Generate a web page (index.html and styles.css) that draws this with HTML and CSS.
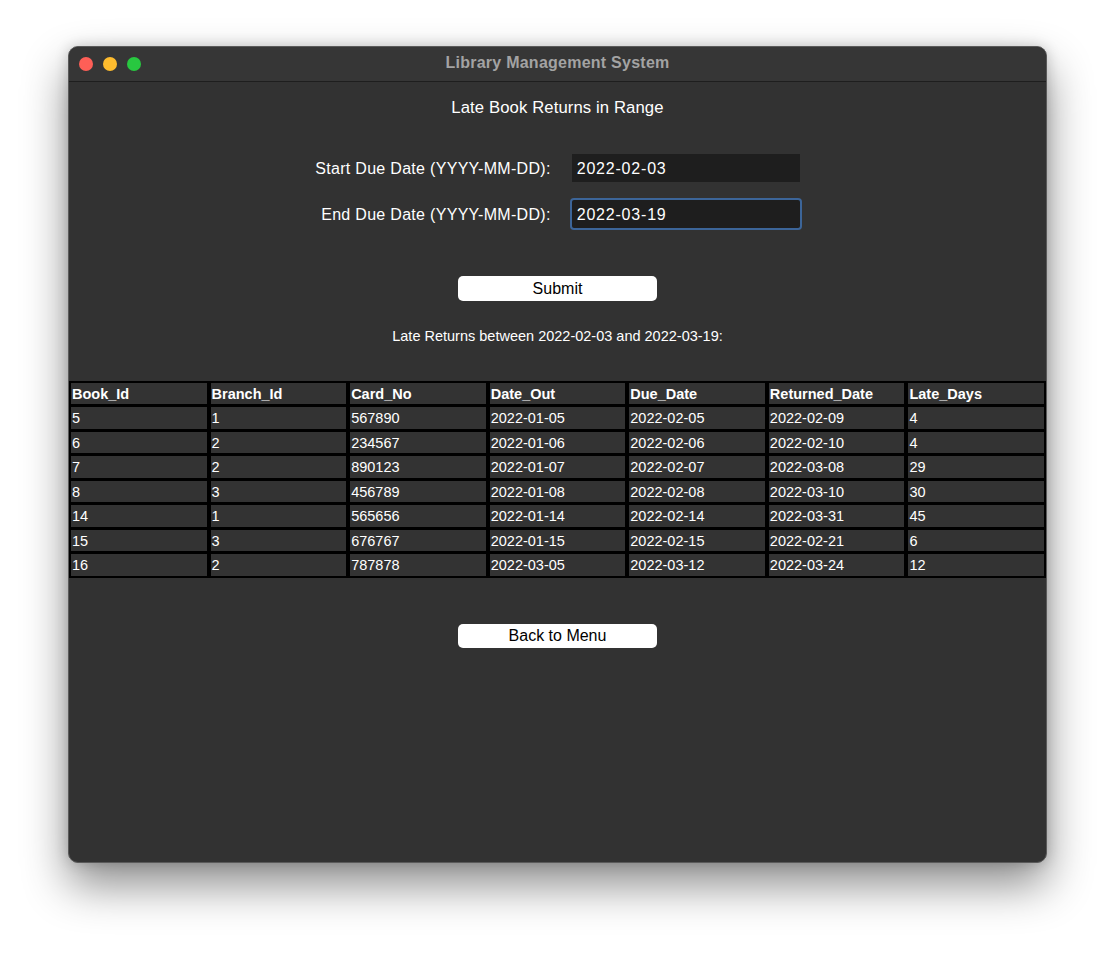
FILE: index.html
```html
<!DOCTYPE html>
<html>
<head>
<meta charset="utf-8">
<title>Library Management System</title>
<link rel="stylesheet" href="styles.css">
</head>
<body>
<div class="window">
  <div class="titlebar">
    <div class="lights">
      <span class="light red"></span>
      <span class="light yellow"></span>
      <span class="light green"></span>
    </div>
    <div class="title">Library Management System</div>
  </div>
  <div class="content">
    <div class="heading">Late Book Returns in Range</div>
    <div class="form">
      <label class="label">Start Due Date (YYYY-MM-DD):</label>
      <div class="entry">2022-02-03</div>
      <label class="label">End Due Date (YYYY-MM-DD):</label>
      <div class="entry focused">2022-03-19</div>
    </div>
    <button class="btn submit">Submit</button>
    <div class="result">Late Returns between 2022-02-03 and 2022-03-19:</div>
    <div class="grid">
      <div class="cell head">Book_Id</div><div class="cell head">Branch_Id</div><div class="cell head">Card_No</div><div class="cell head">Date_Out</div><div class="cell head">Due_Date</div><div class="cell head">Returned_Date</div><div class="cell head">Late_Days</div>
      <div class="cell">5</div><div class="cell">1</div><div class="cell">567890</div><div class="cell">2022-01-05</div><div class="cell">2022-02-05</div><div class="cell">2022-02-09</div><div class="cell">4</div>
      <div class="cell">6</div><div class="cell">2</div><div class="cell">234567</div><div class="cell">2022-01-06</div><div class="cell">2022-02-06</div><div class="cell">2022-02-10</div><div class="cell">4</div>
      <div class="cell">7</div><div class="cell">2</div><div class="cell">890123</div><div class="cell">2022-01-07</div><div class="cell">2022-02-07</div><div class="cell">2022-03-08</div><div class="cell">29</div>
      <div class="cell">8</div><div class="cell">3</div><div class="cell">456789</div><div class="cell">2022-01-08</div><div class="cell">2022-02-08</div><div class="cell">2022-03-10</div><div class="cell">30</div>
      <div class="cell">14</div><div class="cell">1</div><div class="cell">565656</div><div class="cell">2022-01-14</div><div class="cell">2022-02-14</div><div class="cell">2022-03-31</div><div class="cell">45</div>
      <div class="cell">15</div><div class="cell">3</div><div class="cell">676767</div><div class="cell">2022-01-15</div><div class="cell">2022-02-15</div><div class="cell">2022-02-21</div><div class="cell">6</div>
      <div class="cell">16</div><div class="cell">2</div><div class="cell">787878</div><div class="cell">2022-03-05</div><div class="cell">2022-03-12</div><div class="cell">2022-03-24</div><div class="cell">12</div>
    </div>
    <button class="btn back">Back to Menu</button>
  </div>
</div>
</body>
</html>
```
FILE: styles.css
```css
html, body {
  margin: 0;
  padding: 0;
  background: #ffffff;
  font-family: "Liberation Sans", Arial, Helvetica, sans-serif;
}

body {
  padding: 46px 0 0 68px;
  height: 954px;
  box-sizing: border-box;
}

.window {
  width: 979px;
  height: 817px;
  box-sizing: border-box;
  border: 1px solid #5a5a5a;
  border-radius: 10px;
  background: #323232;
  overflow: hidden;
  box-shadow: 0 22px 45px rgba(0, 0, 0, 0.45), 0 0 14px rgba(0, 0, 0, 0.18);
  display: flex;
  flex-direction: column;
}

.titlebar {
  height: 34px;
  flex: none;
  background: #363636;
  border-bottom: 1px solid #1e1e1e;
  display: flex;
  align-items: center;
  position: relative;
}

.lights {
  display: flex;
  gap: 10px;
  padding-left: 10px;
  position: relative;
  z-index: 1;
}

.light {
  width: 14px;
  height: 14px;
  border-radius: 50%;
  display: block;
}
.red { background: #fe5f57; }
.yellow { background: #febc2e; }
.green { background: #28c840; }

.title {
  position: absolute;
  left: 0;
  right: 0;
  top: 0;
  bottom: 2px;
  display: flex;
  align-items: center;
  justify-content: center;
  color: #a3a3a3;
  font-weight: bold;
  font-size: 16px;
  letter-spacing: 0.25px;
}

.content {
  flex: 1;
  display: flex;
  flex-direction: column;
  align-items: center;
  padding-top: 16px;
  color: #ffffff;
}

.heading {
  font-size: 16.7px;
  line-height: 20px;
  height: 20px;
  letter-spacing: 0.1px;
}

.form {
  margin-top: 36px;
  display: grid;
  grid-template-columns: auto 228px;
  column-gap: 21px;
  row-gap: 18px;
  align-items: center;
  margin-left: 0;
}

.label {
  justify-self: end;
  font-size: 16px;
  letter-spacing: 0.3px;
  padding-top: 2px;
}

.entry {
  height: 28px;
  line-height: 29px;
  box-sizing: border-box;
  background: #1e1e1e;
  padding-left: 5px;
  font-size: 16px;
  letter-spacing: 0.8px;
  color: #ffffff;
}

.entry.focused {
  box-shadow: 0 0 0 2px #3c6599;
  border-radius: 2px;
}

.btn {
  display: block;
  width: 199px;
  height: 25px;
  border: none;
  border-radius: 5px;
  background: #ffffff;
  color: #000000;
  font-family: "Liberation Sans", Arial, Helvetica, sans-serif;
  font-size: 16px;
  padding: 0;
  line-height: 25px;
}

.submit {
  margin-top: 48px;
}

.result {
  margin-top: 26px;
  font-size: 14.5px;
  line-height: 18px;
}

.grid {
  margin-top: 36px;
  align-self: stretch;
  background: #000000;
  padding: 1.5px 2px 2px 2px;
  display: grid;
  grid-template-columns: repeat(7, 1fr);
  grid-auto-rows: 21.5px;
  column-gap: 4px;
  row-gap: 3px;
}

.cell {
  background: #333333;
  color: #ffffff;
  font-size: 14.5px;
  line-height: 23px;
  padding-left: 1px;
  white-space: nowrap;
  overflow: hidden;
}

.cell.head {
  font-weight: bold;
}

.back {
  margin-top: 46px;
  height: 24px;
  line-height: 24px;
}
```
